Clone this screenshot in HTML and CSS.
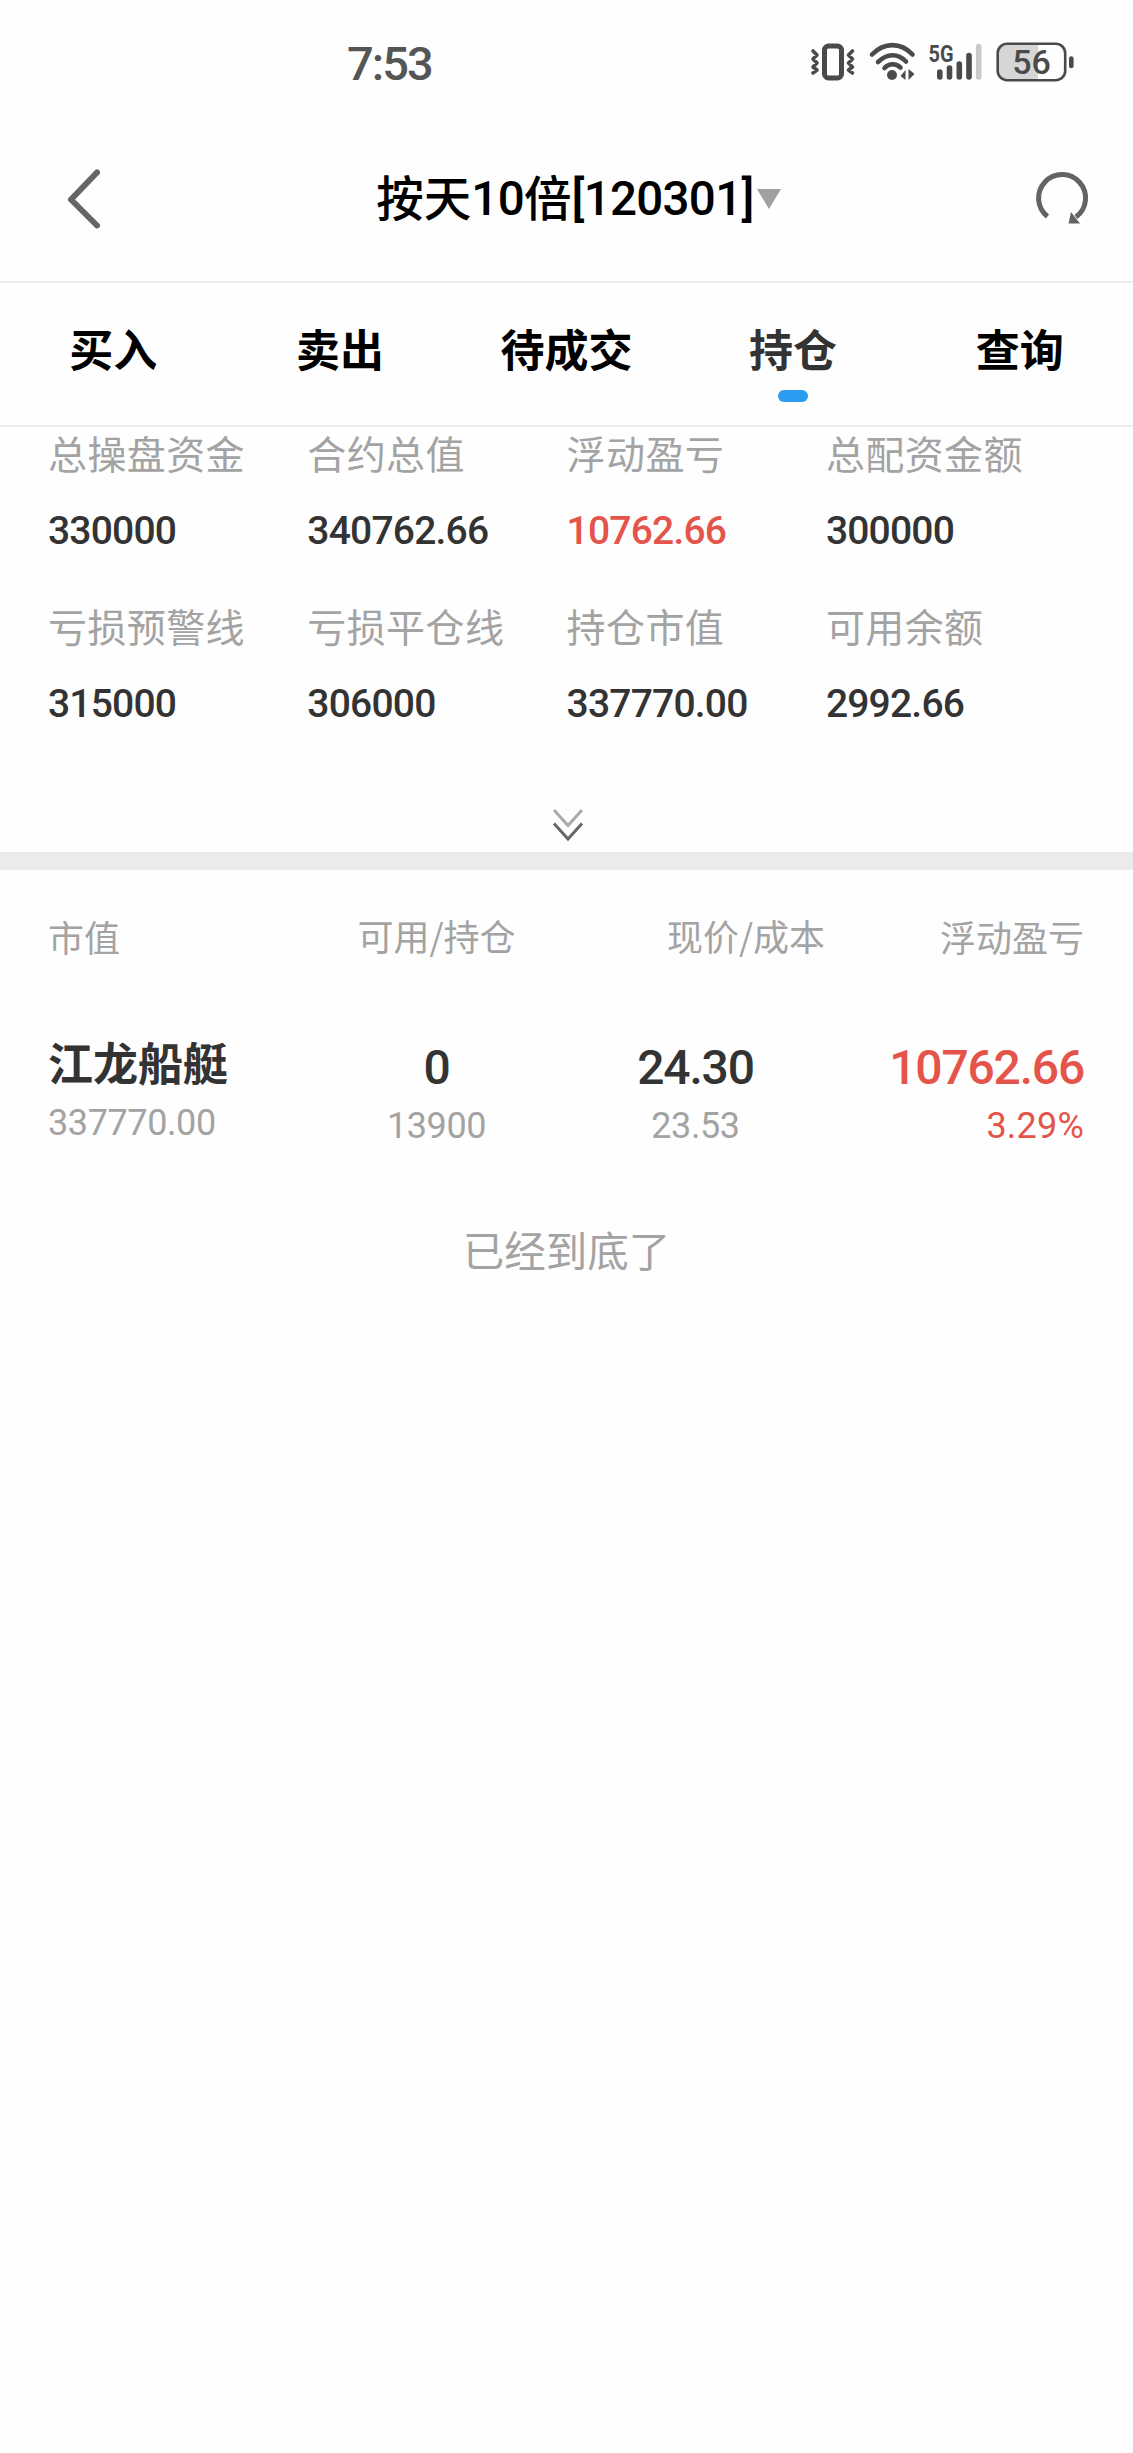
FILE: index.html
```html
<!DOCTYPE html>
<html lang="zh-CN">
<head>
<meta charset="utf-8">
<title>持仓</title>
<link rel="stylesheet" href="styles.css">
</head>
<body>
<div class="status">
  <span class="clock">7:53</span>
  <svg class="status-icons" width="266" height="44" viewBox="810 40 266 44" fill="none" stroke="#4a4a4a" stroke-linecap="round">
    <rect x="824.5" y="46" width="17" height="32" rx="4" stroke-width="5"/>
    <path d="M813 51l4 4-4 4 4 4-4 4 4 3-4 3M852.500 51l-4 4 4 4-4 4 4 4-4 3 4 3" stroke-width="3.600" stroke-linejoin="round"/>
    <path d="M872 54.500C884 42 901 42 912.500 54.500M878 62C887 53 898 53 906 61.500M884.500 68C889 63 896 63 900.500 67.500" stroke-width="4.600"/>
    <circle cx="892" cy="75" r="5" fill="#4a4a4a" stroke="none"/>
    <path d="M900.500 76l5-6v10zM914.500 74l-6-5v11z" fill="#4a4a4a" stroke="none"/>
    <text class="network" x="928.500" y="61.500" textLength="25" lengthAdjust="spacingAndGlyphs">5G</text>
    <path d="M939.800 72v5M949.500 68v9M959.300 64v13M969 55.500v21.500" stroke-width="5.600"/>
    <path d="M978.700 46.500v30.500" stroke="#c9c9c9" stroke-width="5.600"/>
    <path d="M1038 45h-30q-9 0-9 9v16q0 9 9 9h30z" fill="#d6d6d6" stroke="none"/>
    <rect x="997.700" y="43.700" width="67.500" height="36.500" rx="9.500" stroke-width="2.600"/>
    <path d="M1071.300 58.500v7.500" stroke-width="4.600"/>
    <text class="battery" x="1031.500" y="73.500" text-anchor="middle">56</text>
  </svg>
</div>
<header class="header">
  <svg class="back" width="36" height="62" viewBox="0 0 36 62" fill="none" stroke="#666" stroke-width="6" stroke-linecap="round" stroke-linejoin="round"><path d="M31 4.500L5 31.500L31 57.500"/></svg>
  <h1 class="title"><span class="han">按天</span><b class="ten">10</b><span class="han">倍</span><b class="code">[120301]</b><i class="caret"></i></h1>
  <svg class="refresh" width="56" height="56" viewBox="0 0 56 56"><path d="M13.500 45.500A23.500 23.500 0 1 1 42 46" fill="none" stroke="#646262" stroke-width="5"/><path d="M37 41L34.500 52.500H46z" fill="#646262"/></svg>
</header>
<nav class="tabs">
  <a class="tab">买入</a>
  <a class="tab">卖出</a>
  <a class="tab">待成交</a>
  <a class="tab active">持仓</a>
  <a class="tab">查询</a>
</nav>
<section class="summary">
  <dl class="stat"><dt>总操盘资金</dt><dd>330000</dd></dl>
  <dl class="stat"><dt>合约总值</dt><dd>340762.66</dd></dl>
  <dl class="stat"><dt>浮动盈亏</dt><dd class="up">10762.66</dd></dl>
  <dl class="stat"><dt>总配资金额</dt><dd>300000</dd></dl>
  <dl class="stat"><dt>亏损预警线</dt><dd>315000</dd></dl>
  <dl class="stat"><dt>亏损平仓线</dt><dd>306000</dd></dl>
  <dl class="stat"><dt>持仓市值</dt><dd>337770.00</dd></dl>
  <dl class="stat"><dt>可用余额</dt><dd>2992.66</dd></dl>
</section>
<div class="expand">
  <svg width="32" height="34" viewBox="0 0 32 34" fill="none" stroke-width="3"><path d="M2 2L16 17.500L30 2" stroke="#aaa"/><path d="M2 15.500L16 31L30 15.500" stroke="#666"/></svg>
</div>
<section class="positions">
  <div class="grid head">
    <span>市值</span><span class="mid raised">可用/持仓</span><span class="end raised">现价/成本</span><span class="end">浮动盈亏</span>
  </div>
  <div class="grid row">
    <div><div class="name">江龙船艇</div><div class="sub value">337770.00</div></div>
    <div class="mid"><div class="main">0</div><div class="sub">13900</div></div>
    <div class="mid"><div class="main">24.30</div><div class="sub">23.53</div></div>
    <div class="end up"><div class="main">10762.66</div><div class="sub">3.29%</div></div>
  </div>
</section>
<p class="finish">已经到底了</p>
</body>
</html>
```
FILE: styles.css
```css
* { box-sizing: border-box; }
body {
  margin: 0;
  min-height: 2453px;
  background: #fefefe;
  color: #333;
  font-family: "Noto Sans CJK SC", sans-serif;
}
dl, dd, p, h1 { margin: 0; }

.status {
  display: flex;
  justify-content: space-between;
  height: 128px;
  padding: 40px 57px 0 347px;
}
.clock {
  font: 500 47px/48px Roboto, sans-serif;
  color: #555;
  letter-spacing: -1.9px;
}
.status-icons { display: block; }
.network { font: 700 24px Roboto, sans-serif; fill: #4a4a4a; stroke: none; }
.battery { font: 500 34px Roboto, sans-serif; fill: #4a4a4a; stroke: none; }

.header {
  display: flex;
  align-items: center;
  justify-content: space-between;
  height: 155px;
  padding: 0 43px 12px 66px;
  border-bottom: 2px solid #ececec;
}
.title {
  display: flex;
  align-items: center;
  height: 60px;
  margin-left: 21px;
  font-size: 47.5px;
  font-weight: 500;
  line-height: 60px;
  color: #000;
}
.han { margin-top: -5px; }
.ten, .code { font: 500 47.5px/60px Roboto, sans-serif; letter-spacing: -0.7px; }
.caret {
  border: 12px solid transparent;
  border-top: 20px solid #a0a0a0;
  border-bottom: 0;
  margin-left: 3px;
}

.tabs {
  display: grid;
  grid-template-columns: repeat(5, 1fr);
  height: 144px;
  border-bottom: 2px solid #ececec;
}
.tab {
  display: flex;
  flex-direction: column;
  align-items: center;
  padding-top: 33px;
  font-size: 44px;
  font-weight: 700;
  line-height: 64px;
  color: #000;
}
.active { color: #333; }
.active::after {
  content: "";
  width: 30px;
  height: 12px;
  margin-top: 10px;
  border-radius: 6px;
  background: #2b9cf0;
}

.summary {
  display: grid;
  grid-template-columns: repeat(4, 259.3px);
  grid-auto-rows: 173px;
  padding-left: 48px;
}
.stat dt {
  font-size: 39px;
  line-height: 50px;
  letter-spacing: 0.4px;
  color: #a3a3a3;
}
.stat dd {
  margin-top: 29px;
  font: 500 39px/50px Roboto, sans-serif;
  letter-spacing: -0.8px;
}
.expand {
  display: flex;
  justify-content: center;
  height: 97px;
  padding-top: 35px;
  border-bottom: 18px solid #ebebeb;
}
.expand svg { margin-left: 2px; }

.positions { padding: 43px 49px 0 48px; }
.grid { display: grid; grid-template-columns: repeat(4, 1fr); }
.head { height: 125px; font-size: 36px; line-height: 46px; color: #a3a3a3; }
.mid { text-align: center; }
.end { text-align: right; }
.raised { margin-top: -1px; }
.name { font-size: 45px; font-weight: 700; line-height: 52px; margin-top: -2px; }
.main { margin-top: 2px; font: 500 48px/56px Roboto, sans-serif; letter-spacing: -1.2px; }
.sub { margin-top: 6px; font: 400 36px/48px Roboto, sans-serif; color: #a3a3a3; letter-spacing: -0.4px; }
.value { margin-top: 11px; }
.up, .up .main { color: #e5544a; }
.up .sub { color: #e5544a; letter-spacing: 0.2px; }
.stat .up { color: #e5544a; }
.finish { margin-top: 72px; text-align: center; font-size: 41.5px; line-height: 54px; color: #a3a3a3; }
```
